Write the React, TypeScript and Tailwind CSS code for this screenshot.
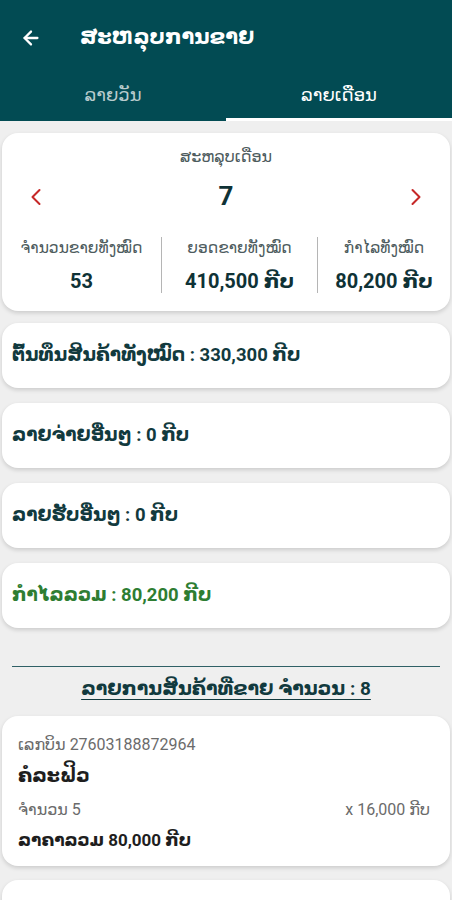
import React, { useState } from 'react';
import { ArrowLeft, ChevronLeft, ChevronRight } from 'lucide-react';

const font = { fontFamily: 'Roboto, "DejaVu Sans", "Noto Sans", sans-serif' };

interface StatProps {
  label: string;
  value: string;
  className: string;
  divider?: boolean;
}

function Stat({ label, value, className, divider }: StatProps) {
  return (
    <div className={`flex items-center ${className}`}>
      <div className="flex flex-1 flex-col items-center">
        <span className="text-[15.5px] leading-5 text-[#4d5b5d]">{label}</span>
        <span className="mt-[11px] text-[20px] font-bold leading-6 text-[#0f3236]">{value}</span>
      </div>
      {divider && <div className="h-[56px] w-px bg-[#b5b5b5]" />}
    </div>
  );
}

function SummaryRow({ text, green }: { text: string; green?: boolean }) {
  return (
    <div className="mx-0.5 flex h-[65px] items-center rounded-[16px] bg-white px-2.5 shadow-[0_2px_4px_rgba(0,0,0,0.15)]">
      <span className={`text-[18.5px] font-bold ${green ? 'text-[#2e7d32]' : 'text-[#123a3e]'}`}>{text}</span>
    </div>
  );
}

export default function App() {
  const [tab, setTab] = useState(1);
  const tabs = ['ລາຍວັນ', 'ລາຍເດືອນ'];

  return (
    <div style={font} className="min-h-[900px] w-[452px] overflow-hidden bg-[#efefef]">
      {/* Header */}
      <header className="bg-[#024b53]">
        <div className="flex h-[75px] items-center px-5">
          <ArrowLeft size={22} className="text-white" strokeWidth={2.5} />
          <span className="ml-[38px] text-[21px] font-bold text-white">ສະຫລຸບການຂາຍ</span>
        </div>
        <div className="flex h-[46px]">
          {tabs.map((t, i) => (
            <button
              key={t}
              onClick={() => setTab(i)}
              className={`flex flex-1 items-center justify-center border-b-[3px] pb-1 text-[18px] ${
                tab === i ? 'border-white text-white' : 'border-transparent text-[#b9cbcd]'
              }`}
            >
              {t}
            </button>
          ))}
        </div>
      </header>

      <main className="flex flex-col pt-3">
        {/* Month card */}
        <div className="mx-0.5 rounded-[16px] bg-white pb-[18px] pt-3 shadow-[0_2px_4px_rgba(0,0,0,0.15)]">
          <div className="text-center text-[16px] text-[#4d5b5d]">ສະຫລຸບເດືອນ</div>
          <div className="mt-2 flex items-center justify-between px-5">
            <ChevronLeft size={28} strokeWidth={1.75} className="text-[#c62828]" />
            <span className="text-[26px] font-bold text-[#0f3236]">7</span>
            <ChevronRight size={28} strokeWidth={1.75} className="text-[#c62828]" />
          </div>
          <div className="mt-[21px] flex">
            <Stat className="w-[160px]" label="ຈຳນວນຂາຍທັງໝົດ" value="53" divider />
            <Stat className="w-[156px]" label="ຍອດຂາຍທັງໝົດ" value="410,500 ກີບ" divider />
            <Stat className="flex-1" label="ກຳໄລທັງໝົດ" value="80,200 ກີບ" />
          </div>
        </div>

        <div className="mt-3 flex flex-col gap-[15px]">
          <SummaryRow text="ຕົ້ນທຶນສິນຄ້າທັງໝົດ : 330,300 ກີບ" />
          <SummaryRow text="ລາຍຈ່າຍອື່ນໆ : 0 ກີບ" />
          <SummaryRow text="ລາຍຮັບອື່ນໆ : 0 ກີບ" />
          <SummaryRow text="ກຳໄລລວມ : 80,200 ກີບ" green />
        </div>

        {/* Product list */}
        <div className="mx-3 mt-[38px] h-px bg-[#2f6066]" />
        <div className="mt-2 text-center text-[19px] font-bold text-[#123a3e] underline underline-offset-4">
          ລາຍການສິນຄ້າທີ່ຂາຍ ຈຳນວນ : 8
        </div>

        <div className="mt-[12px] flex flex-col gap-[14px]">
          <div className="mx-0.5 h-[150px] rounded-[16px] bg-white px-4 pt-[19px] shadow-[0_2px_4px_rgba(0,0,0,0.15)]">
            <div className="text-[16px] leading-5 text-[#6b6b6b]">ເລກບິນ 27603188872964</div>
            <div className="mt-[9px] text-[19px] font-bold leading-6 text-[#1e1e1e]">ຄໍລະຟິວ</div>
            <div className="mt-[12px] flex items-center justify-between pr-1 text-[16px] leading-5 text-[#6b6b6b]">
              <span>ຈຳນວນ 5</span>
              <span>x 16,000 ກີບ</span>
            </div>
            <div className="mt-[8px] text-[17px] font-bold leading-6 text-[#1e1e1e]">ລາຄາລວມ 80,000 ກີບ</div>
          </div>
          <div className="mx-0.5 h-[150px] rounded-[16px] bg-white shadow-[0_2px_4px_rgba(0,0,0,0.15)]" />
        </div>
      </main>
    </div>
  );
}
